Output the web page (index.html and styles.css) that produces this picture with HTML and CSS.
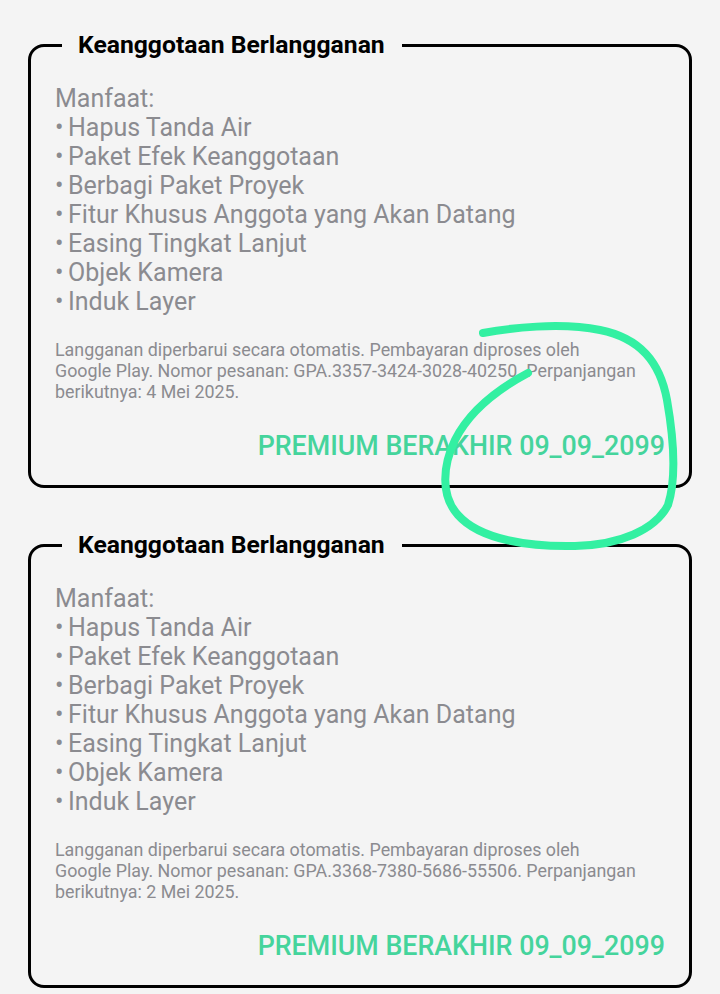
FILE: index.html
```html
<!DOCTYPE html>
<html lang="id">
<head>
<meta charset="utf-8">
<title>Keanggotaan Berlangganan</title>
<link rel="stylesheet" href="styles.css">
</head>
<body>
<main class="page">
  <fieldset class="card">
    <legend class="card-title">Keanggotaan Berlangganan</legend>
    <div class="benefits">
      <p>Manfaat:</p>
      <p><span class="dot">•</span>Hapus Tanda Air</p>
      <p><span class="dot">•</span>Paket Efek Keanggotaan</p>
      <p><span class="dot">•</span>Berbagi Paket Proyek</p>
      <p><span class="dot">•</span>Fitur Khusus Anggota yang Akan Datang</p>
      <p><span class="dot">•</span>Easing Tingkat Lanjut</p>
      <p><span class="dot">•</span>Objek Kamera</p>
      <p><span class="dot">•</span>Induk Layer</p>
    </div>
    <p class="note">Langganan diperbarui secara otomatis. Pembayaran diproses oleh Google Play. Nomor pesanan: GPA.3357-3424-3028-40250. Perpanjangan berikutnya: 4 Mei 2025.</p>
    <p class="status">PREMIUM BERAKHIR 09_09_2099</p>
  </fieldset>
  <fieldset class="card">
    <legend class="card-title">Keanggotaan Berlangganan</legend>
    <div class="benefits">
      <p>Manfaat:</p>
      <p><span class="dot">•</span>Hapus Tanda Air</p>
      <p><span class="dot">•</span>Paket Efek Keanggotaan</p>
      <p><span class="dot">•</span>Berbagi Paket Proyek</p>
      <p><span class="dot">•</span>Fitur Khusus Anggota yang Akan Datang</p>
      <p><span class="dot">•</span>Easing Tingkat Lanjut</p>
      <p><span class="dot">•</span>Objek Kamera</p>
      <p><span class="dot">•</span>Induk Layer</p>
    </div>
    <p class="note">Langganan diperbarui secara otomatis. Pembayaran diproses oleh Google Play. Nomor pesanan: GPA.3368-7380-5686-55506. Perpanjangan berikutnya: 2 Mei 2025.</p>
    <p class="status">PREMIUM BERAKHIR 09_09_2099</p>
  </fieldset>
</main>
<svg class="scribble" width="720" height="994" viewBox="0 0 720 994" aria-hidden="true">
  <path d="M483 333 C 510 328, 560 322, 600 330 C 640 338, 660 362, 667 400 C 674 440, 676 480, 668 505 C 655 530, 620 545, 575 546 C 530 547, 480 540, 458 515 C 440 495, 443 465, 455 440 C 470 410, 500 388, 528 373" fill="none" stroke="#33f0a2" stroke-width="8" stroke-linecap="round" stroke-linejoin="round"/>
</svg>
</body>
</html>
```

FILE: styles.css
```css
* { box-sizing: border-box; }

html, body {
  margin: 0;
  padding: 0;
  background: #f4f4f4;
}

body {
  font-family: Roboto, "Noto Sans", "Liberation Sans", sans-serif;
  width: 720px;
  height: 994px;
  overflow: hidden;
  position: relative;
}

.page {
  display: flex;
  flex-direction: column;
  gap: 43px;
  padding: 31px 28px 0 28px;
}

.card {
  margin: 0;
  border: 3px solid #000;
  border-radius: 16px;
  padding: 25px 24px 24.5px 24px;
  min-width: 0;
}

.card-title {
  margin-left: 7px;
  padding: 0 17px 0 16px;
  font-size: 24.7px;
  line-height: 28px;
  font-weight: 700;
  color: #000;
}

.benefits p {
  margin: 0;
  font-size: 25px;
  line-height: 29px;
  color: #8b8b90;
}

.dot {
  display: inline-block;
  width: 13px;
}

.note {
  margin: 23px 0 0 0;
  font-size: 17.85px;
  line-height: 21px;
  color: #8b8b90;
  padding-right: 27px;
}

.status {
  margin: 28.5px 0 0 0;
  text-align: right;
  font-size: 26.8px;
  line-height: 30px;
  font-weight: 500;
  color: #45d49c;
  padding-right: 0;
}

.scribble {
  position: absolute;
  left: 0;
  top: 0;
  pointer-events: none;
}
```
